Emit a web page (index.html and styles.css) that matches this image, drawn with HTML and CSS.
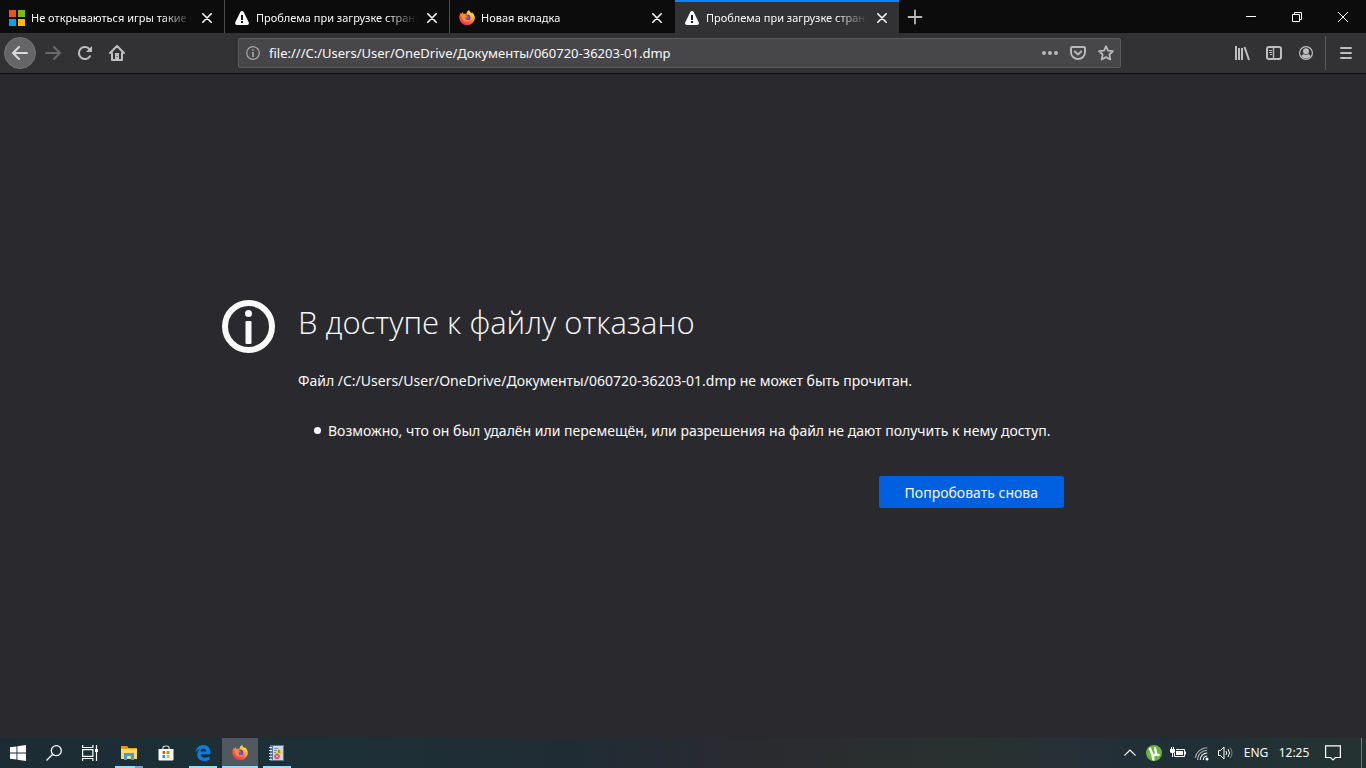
FILE: index.html
```html
<!DOCTYPE html>
<html lang="ru">
<head>
<meta charset="utf-8">
<meta name="viewport" content="width=device-width, initial-scale=1">
<title>Проблема при загрузке страницы</title>
<link rel="stylesheet" href="styles.css">
</head>
<body>
<svg class="defs" width="0" height="0" aria-hidden="true">
  <defs>
    <linearGradient id="flame" x1="0.85" y1="0.05" x2="0.2" y2="1">
      <stop offset="0" stop-color="#fff34f"/><stop offset="0.35" stop-color="#ffb02a"/><stop offset="0.65" stop-color="#ff5a36"/><stop offset="1" stop-color="#f0207a"/>
    </linearGradient>
    <radialGradient id="globe"><stop offset="0" stop-color="#8a5bf5"/><stop offset="1" stop-color="#5a35c8"/></radialGradient>
    <symbol id="firefox" viewBox="0 0 16 16">
      <path fill="url(#flame)" d="M10.2 0c.2 1.6 1.300 2.300 2.300 3.300l.4-1c1.900 1.500 3 3.700 2.900 6.100A7.800 7.600 0 0 1 .3 8.300C.2 6 .8 4.300 2 2.600l.3 1.500L3.600 2l.7 1.900c1.500-.2 2.300 0 3 .3C7.400 2.500 8.500.8 10.200 0z"/>
      <circle cx="8" cy="7.800" r="3.300" fill="url(#globe)"/>
      <path fill="#ff8a2a" d="M2.500 5.400c1.500-.9 3-.8 4.200-.2.700.4 1.300.6 2.200.6-.3.900-1.200 1.200-2.200 1.600-.5 1.500.3 2.600 1.700 2.600 1 0 1.700-.4 2.500-.2-1 1.800-3 2.500-4.800 1.800C3.600 10.700 2.300 8.200 2.500 5.400z"/>
    </symbol>
    <symbol id="warning" viewBox="0 0 16 16">
      <path fill="#f9f9fa" d="M8 1c.8 0 1.300.4 1.700 1.100l5 10.200c.6 1.300-.1 2.700-1.500 2.700H2.800c-1.400 0-2.100-1.400-1.500-2.700l5-10.200C6.700 1.400 7.200 1 8 1z"/>
      <path fill="#18181a" d="M7 5h2v5H7zM7 11h2v2H7z"/>
    </symbol>
    <symbol id="close" viewBox="0 0 10 10"><path d="M.8.8l8.400 8.400M9.200.8L.8 9.200" stroke="#f9f9fa" stroke-width="1.600" stroke-linecap="round"/></symbol>
  </defs>
</svg>

<header class="browser">
  <div class="titlebar">
    <div class="tabs" role="tablist">
      <div class="tab">
        <svg class="icon" viewBox="0 0 16 16" aria-hidden="true"><path fill="#f25022" d="M0 0h7v7H0z"/><path fill="#7fba00" d="M9 0h7v7H9z"/><path fill="#00a4ef" d="M0 9h7v7H0z"/><path fill="#ffb900" d="M9 9h7v7H9z"/></svg>
        <button class="tab-label" role="tab" aria-selected="false">Не открываються игры такие как</button>
        <button class="tab-close" aria-label="Закрыть вкладку"><svg class="cross" aria-hidden="true"><use href="#close"/></svg></button>
      </div>
      <div class="tab">
        <svg class="icon" aria-hidden="true"><use href="#warning"/></svg>
        <button class="tab-label" role="tab" aria-selected="false">Проблема при загрузке страницы</button>
        <button class="tab-close" aria-label="Закрыть вкладку"><svg class="cross" aria-hidden="true"><use href="#close"/></svg></button>
      </div>
      <div class="tab">
        <svg class="icon" aria-hidden="true"><use href="#firefox"/></svg>
        <button class="tab-label" role="tab" aria-selected="false">Новая вкладка</button>
        <button class="tab-close" aria-label="Закрыть вкладку"><svg class="cross" aria-hidden="true"><use href="#close"/></svg></button>
      </div>
      <div class="tab tab-active">
        <svg class="icon" aria-hidden="true"><use href="#warning"/></svg>
        <button class="tab-label" role="tab" aria-selected="true">Проблема при загрузке страницы</button>
        <button class="tab-close" aria-label="Закрыть вкладку"><svg class="cross" aria-hidden="true"><use href="#close"/></svg></button>
      </div>
    </div>
    <button class="new-tab" aria-label="Новая вкладка"><svg class="icon" viewBox="0 0 16 16" aria-hidden="true"><path d="M8 1.500v13M1.500 8h13" stroke="#b9b9bb" stroke-width="1.800" stroke-linecap="round"/></svg></button>
    <div class="window-controls">
      <button aria-label="Свернуть"><svg class="icon" viewBox="0 0 16 16" aria-hidden="true"><path fill="#fff" d="M3 7h10v1H3z"/></svg></button>
      <button aria-label="Свернуть в окно"><svg class="icon" viewBox="0 0 16 16" fill="none" stroke="#fff" aria-hidden="true"><path d="M3.500 5.500h7v7h-7zM5.500 5V3.500h7v7H11"/></svg></button>
      <button aria-label="Закрыть"><svg class="icon" viewBox="0 0 16 16" stroke="#fff" aria-hidden="true"><path d="M3 3l10 10M13 3L3 13"/></svg></button>
    </div>
  </div>

  <nav class="toolbar" aria-label="Навигация">
    <div class="nav-buttons">
      <button class="back" aria-label="Назад"><svg class="icon" viewBox="0 0 16 16" fill="none" stroke="#dadadb" stroke-width="2" stroke-linecap="round" stroke-linejoin="round" aria-hidden="true"><path d="M15 8H1.500M7 2L1 8l6 6"/></svg></button>
      <button class="tool" aria-label="Вперёд"><svg class="icon" viewBox="0 0 16 16" fill="none" stroke="#69696b" stroke-width="2" stroke-linecap="round" stroke-linejoin="round" aria-hidden="true"><path d="M1 8h13.500M9 2l6 6-6 6"/></svg></button>
      <button class="tool" aria-label="Обновить"><svg class="icon" viewBox="0 0 16 16" fill="none" stroke="#bebebf" stroke-width="2" stroke-linecap="round" aria-hidden="true"><path d="M13 11.200A6 6 0 1 1 12.600 4.300"/><path fill="#bebebf" stroke="none" d="M15 1v6H9z"/></svg></button>
      <button class="tool" aria-label="Домой"><svg class="icon" viewBox="0 0 16 16" fill="none" stroke="#bebebf" stroke-width="2" stroke-linecap="round" stroke-linejoin="round" aria-hidden="true"><path d="M1 8l7-7 7 7M3 8v7h10V8"/><path stroke="none" fill="#bebebf" fill-rule="evenodd" d="M6 8h4v7H6zM7.500 11h1v1h-1z"/></svg></button>
    </div>
    <div class="url-bar">
      <svg class="icon" viewBox="0 0 16 16" aria-hidden="true"><circle cx="8" cy="8" r="6.300" fill="none" stroke="#a9a9ab" stroke-width="1.200"/><path fill="#a9a9ab" d="M7.200 7h1.600v5H7.200zM7.200 4.200h1.600v1.600H7.200z"/></svg>
      <input class="url" type="text" aria-label="Адрес" value="file:///C:/Users/User/OneDrive/Документы/060720-36203-01.dmp">
      <button class="page-action" aria-label="Действия на странице"><svg class="icon" viewBox="0 0 16 16" fill="#b8b8ba" aria-hidden="true"><circle cx="2" cy="8" r="2"/><circle cx="8" cy="8" r="2"/><circle cx="14" cy="8" r="2"/></svg></button>
      <button class="page-action" aria-label="Сохранить в Pocket"><svg class="icon" viewBox="0 0 16 16" fill="none" stroke="#b8b8ba" stroke-width="2" stroke-linecap="round" stroke-linejoin="round" aria-hidden="true"><path d="M2 2h12a1 1 0 0 1 1 1v4.500a7 6.500 0 0 1-14 0V3a1 1 0 0 1 1-1zM4.800 6.500L8 9.500l3.200-3"/></svg></button>
      <button class="page-action" aria-label="Добавить в закладки"><svg class="icon" viewBox="0 0 16 16" fill="none" stroke="#b8b8ba" stroke-width="1.800" stroke-linejoin="round" aria-hidden="true"><path d="M8 1.200l2 4.400 4.900.6-3.500 3.300.9 5L8 12.100l-4.300 2.400.9-5L1.100 6.200 6 5.600z"/></svg></button>
    </div>
    <div class="tools">
      <button class="tool" aria-label="Библиотека"><svg class="icon" viewBox="0 0 16 16" fill="none" stroke="#bebebf" stroke-width="2" aria-hidden="true"><path d="M2 1v14M5 3v12M8 3v12M10.500 2L15 15"/></svg></button>
      <button class="tool" aria-label="Боковая панель"><svg class="icon" viewBox="0 0 16 16" fill="none" stroke="#bebebf" aria-hidden="true"><rect x="1" y="2" width="14" height="12" rx="2" stroke-width="2"/><path d="M7.500 2v12" stroke-width="1.400"/><path d="M3 5.500h3M3 7.500h3M4 9.500h2"/></svg></button>
      <button class="tool" aria-label="Учётная запись"><svg class="icon" viewBox="0 0 16 16" aria-hidden="true"><circle cx="8" cy="8" r="6.400" fill="none" stroke="#bebebf" stroke-width="1.200"/><circle cx="8" cy="6.200" r="3" fill="#bebebf"/><path fill="#bebebf" d="M3.300 11c1.200-1.600 2-1.700 3-1.700 1 .8 2.400.8 3.400 0 1 0 1.800.1 3 1.700-2 3.100-7.400 3.100-9.400 0z"/></svg></button>
    </div>
    <button class="menu" aria-label="Меню"><svg class="icon" viewBox="0 0 16 16" stroke="#bebebf" stroke-width="2" stroke-linecap="round" aria-hidden="true"><path d="M3 3h10M3 8h10M3 13h10"/></svg></button>
  </nav>
</header>

<main class="page">
  <section class="error">
    <svg class="info" viewBox="0 0 54 54" aria-hidden="true"><circle cx="26.500" cy="26.500" r="23.500" fill="none" stroke="#f9f9fa" stroke-width="6"/><circle cx="26.500" cy="13.500" r="3.500" fill="#f9f9fa"/><rect x="23.500" y="21" width="6" height="23" rx="1" fill="#f9f9fa"/></svg>
    <div class="error-text">
      <h1>В доступе к файлу отказано</h1>
      <p>Файл /C:/Users/User/OneDrive/Документы/060720-36203-01.dmp не может быть прочитан.</p>
      <ul><li>Возможно, что он был удалён или перемещён, или разрешения на файл не дают получить к нему доступ.</li></ul>
      <div class="actions"><button class="retry">Попробовать снова</button></div>
    </div>
  </section>
</main>

<footer class="taskbar">
  <div class="system-buttons">
    <button aria-label="Пуск"><svg class="icon" viewBox="0 0 16 16" fill="#fff" aria-hidden="true"><path d="M0 2.300L6.500 1.400v6.100H0zM7.400 1.300L16 0v7.500H7.400zM0 8.400h6.500v6.200L0 13.700zM7.400 8.400H16V16l-8.600-1.300z"/></svg></button>
    <button aria-label="Поиск"><svg class="icon" viewBox="0 0 16 16" fill="none" stroke="#fff" stroke-width="1.300" aria-hidden="true"><circle cx="10.300" cy="5.700" r="5"/><path d="M6.700 9.300L.5 15.500"/></svg></button>
    <button aria-label="Представление задач"><svg class="icon" viewBox="0 0 16 16" fill="none" stroke="#fff" stroke-width="1.200" aria-hidden="true"><path d="M.6 0v2.500h10.300V0M.6 16v-2.500h10.300V16M.6 4.600h10.300v6.800H.6zM14.500 0v16"/><path stroke="none" fill="#fff" d="M13 4h3v3h-3z"/></svg></button>
  </div>
  <div class="apps">
    <button class="running grouped" aria-label="Проводник"><svg class="icon" viewBox="0 0 16 16" aria-hidden="true"><path fill="#e8a317" d="M0 1h6l1.500 2H16v4H0z"/><path fill="#ffd866" d="M0 4h16v10H0z"/><path fill="#d99a12" d="M0 1h6l1 2H0z"/><path fill="#3e9be9" d="M3 8h10v7h-3v-4H6v4H3z"/></svg></button>
    <button aria-label="Microsoft Store"><svg class="icon" viewBox="0 0 16 16" aria-hidden="true"><path d="M5 4V2.500Q5 1 8 1t3 1.500V4" fill="none" stroke="#d7dadd" stroke-width="1.200"/><path fill="#fff" d="M.5 4h15v10.500q0 1-1 1h-13q-1 0-1-1z"/><path fill="#f25022" d="M4.500 6H7v3H4.500z"/><path fill="#7fba00" d="M8.500 6h3v3h-3z"/><path fill="#00a4ef" d="M4.500 10H7v3H4.500z"/><path fill="#ffb900" d="M8.500 10h3v3h-3z"/></svg></button>
    <button class="running" aria-label="Microsoft Edge"><svg class="icon" viewBox="0 0 16 16" aria-hidden="true"><path fill="#0a7de0" d="M.5 7.300C1.100 3 4 0 8.300 0c4.600 0 7.100 3.300 7.100 7.300v1.900H5.500c.2 2.600 2.200 3.600 4.500 3.600 1.700 0 3.200-.5 4.500-1.200v3.100c-1.400.8-3.300 1.300-5.300 1.300-4.300 0-7-2.500-7-6.400 0-2.400 1.300-4.400 3.600-5.500C3.400 4.500 1.700 5.500.5 7.300zM5.600 6.400h5.500c0-1.700-.8-2.800-2.500-2.800-1.800 0-2.800 1.200-3 2.800z"/></svg></button>
    <button class="running current" aria-label="Firefox"><svg class="icon" aria-hidden="true"><use href="#firefox"/></svg></button>
    <button class="running" aria-label="BlueScreenView"><svg class="icon" viewBox="0 0 16 16" aria-hidden="true"><path fill="#5f7796" d="M1 0h14v16H1z"/><path fill="#cad8e8" d="M4 1h10v14H4z"/><path stroke="#d8e2ed" d="M0 2.500h3M0 5.500h3M0 8.500h3M0 11.500h3M0 14.500h3"/><path stroke="#7890ab" d="M5 3.500h4M5 5.500h3M5 7.500h2"/><path fill="#e8d52b" d="M10 3l4 6H6z"/><path fill="#5e561a" d="M9.500 5h1v3h-1z"/><circle cx="8" cy="11.500" r="2.800" fill="#d84a47"/><path stroke="#fff" d="M7 10.500l2 2M9 10.500l-2 2"/></svg></button>
  </div>
  <div class="tray">
    <button aria-label="Показать скрытые значки"><svg class="icon" viewBox="0 0 16 16" fill="none" stroke="#fff" stroke-width="1.200" aria-hidden="true"><path d="M2.500 10.500L8 5l5.500 5.500"/></svg></button>
    <button aria-label="µTorrent"><svg class="icon" viewBox="0 0 16 16" aria-hidden="true"><circle cx="8" cy="8" r="8" fill="#69b33e"/><path fill="none" stroke="#fff" stroke-width="2.400" stroke-linecap="round" d="M4 3.500l2 5.200c1 2.300 4 1.800 4-.7L9 3.300M10 8.800c.6 1.500 1.600 1.600 2.500.9M6.500 10.500l1 4"/></svg></button>
    <button aria-label="Батарея"><svg class="icon" viewBox="0 0 16 16" aria-hidden="true"><path fill="none" stroke="#fff" d="M6 4.500h8.500v7h-10V8M15.500 6.500v3M1.500 2v2M3.500 2v2"/><path fill="#fff" d="M0 4h5v3L4 8H3v4H2V8H1L0 7zM6 6h7v4H6z"/></svg></button>
    <button aria-label="Сеть"><svg class="icon" viewBox="0 0 16 16" fill="none" stroke="#fff" stroke-width="1.100" aria-hidden="true"><path d="M6.200 15a7 7 0 0 1 7-7M9.200 15a4 4 0 0 1 4-4"/><path stroke="#a8b1b3" d="M3.500 15A9.700 9.700 0 0 1 13.200 5.300M1.200 13A12 12 0 0 1 13.200 2.800"/><circle cx="13" cy="14" r="1.500" fill="#fff" stroke="none"/></svg></button>
    <button aria-label="Громкость"><svg class="icon" viewBox="0 0 16 16" fill="none" stroke="#fff" aria-hidden="true"><path d="M.5 5.500h2L6 2v12l-3.500-3.500h-2zM8 6q1.500 2 0 4M10 4q3 4 0 8"/><path stroke="#78868a" d="M12 2.500q4 5.500 0 11"/></svg></button>
    <button class="tray-text">ENG</button>
    <button class="tray-text clock"><time datetime="12:25">12:25</time></button>
    <button class="notifications" aria-label="Центр уведомлений"><svg class="icon" viewBox="0 0 16 16" fill="none" stroke="#fff" stroke-width="1.200" aria-hidden="true"><path d="M.6.8h14.800v11.700h-5L8 15l-2.400-2.500h-5z"/></svg></button>
  </div>
</footer>
</body>
</html>
```
FILE: styles.css
```css
* { box-sizing: border-box; }

body {
  display: flex;
  flex-direction: column;
  min-height: 100vh;
  margin: 0;
  background: #2a2a2e;
  color: #f9f9fa;
  font-family: "Noto Sans", "Open Sans", sans-serif;
  font-size: 14px;
}

button, input {
  margin: 0;
  padding: 0;
  border: 0;
  background: none;
  color: inherit;
  font: inherit;
}

button {
  display: flex;
  align-items: center;
  justify-content: center;
}

.defs { position: absolute; }
.icon { display: block; flex: none; width: 16px; height: 16px; }
.cross { display: block; width: 10px; height: 10px; }

/* Tab strip */
.titlebar {
  display: flex;
  height: 33px;
  background: #0c0c0d;
}

.tabs { display: flex; flex: 0 1 899px; min-width: 0; }

.tab {
  display: flex;
  flex: 1 1 0;
  align-items: center;
  min-width: 0;
  padding: 2px 8px 0 9px;
  border-right: 1px solid #4f4f50;
  font-size: 11px;
}

.tab:nth-child(3) { border-right-color: transparent; }

.tab:nth-child(even) { padding-left: 9px; }

.tab-active {
  padding-top: 0;
  border-top: 2px solid #0a84ff;
  border-right: 0;
  background: #323234;
}

.tab-label {
  display: block;
  flex: 1;
  min-width: 0;
  margin: 0 6px;
  overflow: hidden;
  line-height: 20px;
  text-align: left;
  white-space: nowrap;
  -webkit-mask-image: linear-gradient(to left, transparent, #000 30px);
  mask-image: linear-gradient(to left, transparent, #000 30px);
}

.tab-close { width: 18px; height: 20px; }

.new-tab { width: 32px; }

.window-controls { display: flex; margin-left: auto; }
.window-controls button { width: 46px; }

/* Navigation toolbar */
.toolbar {
  display: flex;
  align-items: center;
  height: 41px;
  background: #323234;
  border-bottom: 1px solid #0c0c0d;
}

.nav-buttons { display: flex; align-items: center; flex: none; width: 238px; padding-left: 4px; }

.back {
  width: 32px;
  height: 32px;
  margin-right: 1px;
  border: 1px solid #747476;
  border-radius: 50%;
  background: #656567;
}

.tool { width: 32px; height: 32px; }

.url-bar {
  display: flex;
  flex: 1;
  align-items: center;
  min-width: 0;
  height: 30px;
  padding-left: 6px;
  border: 1px solid #5b5b5d;
  border-radius: 2px;
  background: #474749;
}

.url { flex: 1; min-width: 0; margin-left: 8px; font-size: 13px; line-height: 20px; outline: 0; }

.page-action { width: 28px; height: 28px; }

.tools { display: flex; flex: none; margin-left: 105px; }

.menu { width: 41px; height: 34px; margin-left: 3px; border-left: 1px solid #5b5b5d; }

/* Error page */
.page {
  display: flex;
  flex: 1;
  align-items: center;
  justify-content: center;
  padding: 0 16px 4px;
}

.error {
  display: grid;
  grid-template-columns: 76px minmax(0, 770px) 76px;
  flex: 0 1 922px;
}

.info { width: 54px; height: 54px; }

h1 {
  margin: 0;
  font-family: "Open Sans", "Noto Sans", sans-serif;
  font-size: 31px;
  font-weight: 300;
  line-height: 44px;
}

.error-text p, .error-text ul {
  margin: 24px 0 0;
  line-height: 26px;
}

.error-text ul { padding-left: 16px; list-style: none; }

.error-text li { display: flex; gap: 7px; }

.error-text li::before {
  content: "";
  flex: none;
  width: 7px;
  height: 7px;
  margin-top: 9px;
  border-radius: 50%;
  background: currentColor;
}

.actions { display: flex; justify-content: flex-end; margin: 32px 4px 0 0; }

.retry {
  min-height: 32px;
  padding: 0 26px;
  border-radius: 2px;
  background: #0060df;
}

/* Taskbar */
.taskbar {
  display: flex;
  justify-content: space-between;
  height: 30px;
  background: linear-gradient(to right, #1c2c34, #1d3037 22%, #202c34 42%, #272a31 51%, #2a2c2e 58%, #28312f 72%, #252f38 80%, #202f36 85%, #243331);
}

.system-buttons, .apps, .tray { display: flex; }
.system-buttons button { width: 36px; }

.apps { flex: 1; gap: 1px; margin-left: 3px; }

.apps button { width: 36px; }

.running {
  background: linear-gradient(#99dcf7, #99dcf7) center bottom / 28px 2px no-repeat;
}

.grouped {
  background: linear-gradient(to right, #99dcf7 20px, #7ba5b7 20px) center bottom / 28px 2px no-repeat;
}

.current { background-color: #50595f; background-size: 36px 2px; }

.tray { padding-right: 4px; font-size: 12px; line-height: 20px; }
.tray button { width: 24px; }
.tray .tray-text { width: 36px; }
.tray .clock { width: 40px; }
.tray .notifications { width: 48px; padding-right: 9px; border-right: 1px solid #68787a; }
```
